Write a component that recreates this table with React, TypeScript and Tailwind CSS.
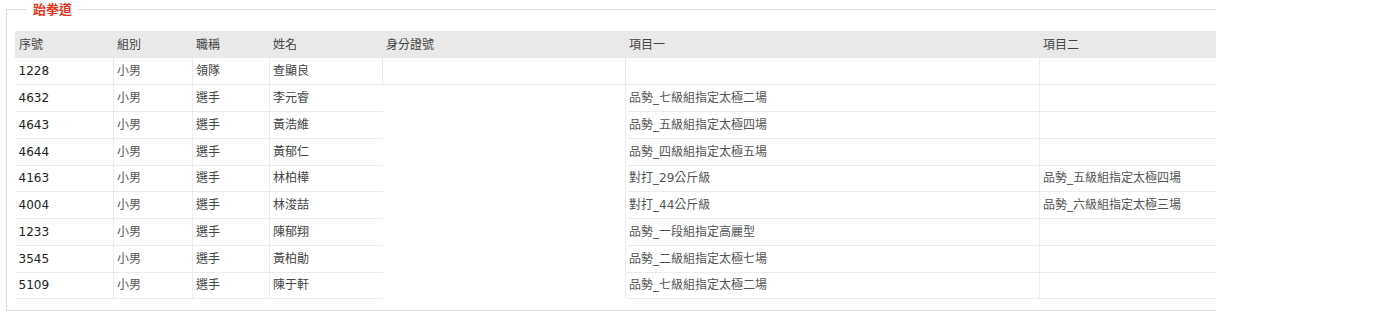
import React from "react";

interface Row {
  no: string;
  group: string;
  role: string;
  name: string;
  item1: string;
  item2: string;
}

const rows: Array<Row> = [
  { no: "1228", group: "小男", role: "領隊", name: "查顯良", item1: "", item2: "" },
  { no: "4632", group: "小男", role: "選手", name: "李元睿", item1: "品勢_七級組指定太極二場", item2: "" },
  { no: "4643", group: "小男", role: "選手", name: "黃浩維", item1: "品勢_五級組指定太極四場", item2: "" },
  { no: "4644", group: "小男", role: "選手", name: "黃郁仁", item1: "品勢_四級組指定太極五場", item2: "" },
  { no: "4163", group: "小男", role: "選手", name: "林柏樺", item1: "對打_29公斤級", item2: "品勢_五級組指定太極四場" },
  { no: "4004", group: "小男", role: "選手", name: "林浚喆", item1: "對打_44公斤級", item2: "品勢_六級組指定太極三場" },
  { no: "1233", group: "小男", role: "選手", name: "陳郁翔", item1: "品勢_一段組指定高麗型", item2: "" },
  { no: "3545", group: "小男", role: "選手", name: "黃柏勛", item1: "品勢_二級組指定太極七場", item2: "" },
  { no: "5109", group: "小男", role: "選手", name: "陳于軒", item1: "品勢_七級組指定太極二場", item2: "" },
];

const headers = ["序號", "組別", "職稱", "姓名", "身分證號", "項目一", "項目二"];
const widths = ["w-[98px]", "w-[79px]", "w-[77px]", "w-[113px]", "w-[243px]", "w-[414px]", "w-[260px]"];

export default function App() {
  return (
    <div className="w-[1216px] h-[320px] overflow-hidden bg-white font-['DejaVu_Sans','Noto_Sans_CJK_TC',sans-serif] text-[12px] text-[#333]">
      <fieldset className="ml-[6px] w-[1300px] border border-[#dcdcdc] pl-[8px] pb-[11px]">
        <legend className="ml-[12px] px-[6px] h-[18px] leading-[18px] text-[13px] font-bold text-[#e5341a] font-['Noto_Sans_CJK_TC',sans-serif]">
          跆拳道
        </legend>
        <table className="mt-[13px] table-fixed border-collapse">
          <colgroup>
            {widths.map((w, i) => (
              <col key={i} className={w} />
            ))}
          </colgroup>
          <thead>
            <tr className="h-[27px] bg-[#e9e9e9]">
              {headers.map((h) => (
                <th key={h} className="px-[3px] text-left font-normal text-[#444] border-l border-[#e9e9e9]">
                  {h}
                </th>
              ))}
            </tr>
          </thead>
          <tbody>
            {rows.map((r, i) => (
              <tr key={r.no} className="h-[26.75px]">
                <td className="px-[3px] border-b border-[#ececec] text-[#222]">{r.no}</td>
                <td className="px-[3px] border-b border-l border-[#ececec] text-[#555]">{r.group}</td>
                <td className="px-[3px] border-b border-l border-[#ececec] text-[#444]">{r.role}</td>
                <td className="px-[3px] border-b border-l border-[#ececec] text-[#444]">{r.name}</td>
                {/* 身分證號 已遮蔽 */}
                <td
                  className={
                    i === 0
                      ? "px-[3px] border-b border-l border-[#ececec]"
                      : "px-[3px] border-b border-b-white"
                  }
                ></td>
                <td className="px-[3px] border-b border-l border-[#ececec] text-[#555]">{r.item1}</td>
                <td className="px-[3px] border-b border-l border-[#ececec] text-[#555]">{r.item2}</td>
              </tr>
            ))}
          </tbody>
        </table>
      </fieldset>
    </div>
  );
}
